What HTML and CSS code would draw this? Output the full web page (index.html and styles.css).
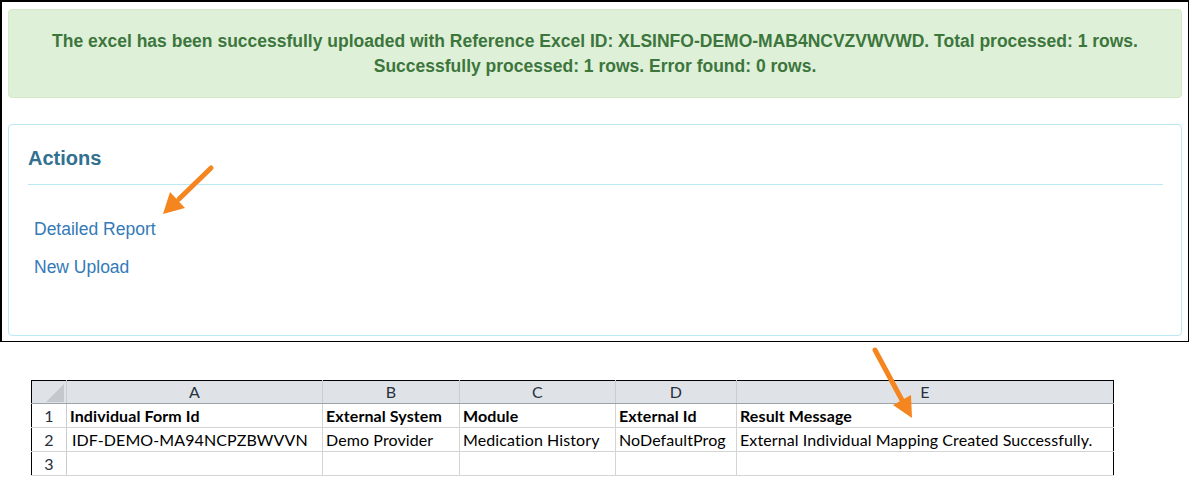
FILE: index.html
```html
<!DOCTYPE html>
<html>
<head>
<meta charset="utf-8">
<link rel="stylesheet" href="styles.css">
</head>
<body>
<div class="page">
  <div class="screen">
    <div class="alert">
      The excel has been successfully uploaded with Reference Excel ID: XLSINFO-DEMO-MAB4NCVZVWVWD. Total processed: 1 rows.<br>
      Successfully processed: 1 rows. Error found: 0 rows.
    </div>
    <div class="panel">
      <h4 class="panel-title">Actions</h4>
      <hr class="rule">
      <a class="link" href="#">Detailed Report</a>
      <a class="link" href="#">New Upload</a>
    </div>
  </div>
  <div class="sheet-wrap">
    <table class="sheet">
      <colgroup>
        <col class="c-rn"><col class="c-a"><col class="c-b"><col class="c-c"><col class="c-d"><col class="c-e">
      </colgroup>
      <tr class="hdr">
        <th class="corner"><svg class="tri" width="18" height="18" viewBox="0 0 18 18"><polygon points="18,0 18,18 0,18" fill="#c4c8cd"/></svg></th>
        <th>A</th><th>B</th><th>C</th><th>D</th><th>E</th>
      </tr>
      <tr>
        <td class="rn">1</td>
        <td class="b">Individual Form Id</td>
        <td class="b">External System</td>
        <td class="b">Module</td>
        <td class="b">External Id</td>
        <td class="b">Result Message</td>
      </tr>
      <tr>
        <td class="rn">2</td>
        <td class="ind">IDF-DEMO-MA94NCPZBWVVN</td>
        <td>Demo Provider</td>
        <td>Medication History</td>
        <td>NoDefaultProg</td>
        <td>External Individual Mapping Created Successfully.</td>
      </tr>
      <tr>
        <td class="rn">3</td>
        <td></td><td></td><td></td><td></td><td></td>
      </tr>
    </table>
  </div>
  <svg class="arrows" width="1192" height="490" viewBox="0 0 1192 490">
    <line x1="211" y1="168" x2="179" y2="199" stroke="#f5861f" stroke-width="5" stroke-linecap="round"/>
    <polygon points="163,214 185,208 170,192" fill="#f5861f"/>
    <line x1="875" y1="350" x2="903" y2="402" stroke="#f5861f" stroke-width="5" stroke-linecap="round"/>
    <polygon points="912,418 911,395 893,405" fill="#f5861f"/>
  </svg>
</div>
</body>
</html>
```
FILE: styles.css
```css
* { box-sizing: border-box; }
html, body { margin: 0; padding: 0; background: #fff; }
.page { position: relative; width: 1192px; height: 490px; overflow: hidden; }

.screen {
  width: 1189px;
  height: 342px;
  border: 1px solid #000;
  border-left-width: 2px;
  border-top-width: 2px;
  padding: 7px 6px 0 6px;
  font-family: "Liberation Sans", Arial, sans-serif;
}

.alert {
  height: 89px;
  background: #dff0d8;
  border: 1px solid #d6e9c6;
  border-radius: 4px;
  color: #3c763d;
  font-weight: bold;
  font-size: 17.5px;
  line-height: 25px;
  text-align: center;
  padding: 19px 4px 0;
  white-space: nowrap;
}

.panel {
  margin-top: 26px;
  height: 212px;
  border: 1px solid #bce8f1;
  border-radius: 4px;
  padding: 21px 18px 0 19px;
  display: flex;
  flex-direction: column;
  align-items: flex-start;
}

.panel-title {
  margin: 0;
  font-size: 20px;
  line-height: 24px;
  font-weight: bold;
  color: #31708f;
}

.rule {
  align-self: stretch;
  margin: 14px 0 34px;
  border: 0;
  border-top: 1px solid #bce8f1;
  height: 0;
}

.link {
  margin-left: 6px;
  font-size: 17.5px;
  line-height: 20px;
  color: #337ab7;
  text-decoration: none;
  margin-bottom: 18px;
}

.sheet-wrap { margin: 38px 0 0 31px; }

.sheet {
  border-collapse: collapse;
  table-layout: fixed;
  width: 1082px;
  border: 1px solid #000;
  font-family: Lato, "Open Sans", sans-serif;
  font-size: 16px;
  letter-spacing: 0.1px;
  color: #000;
}
.c-rn { width: 35px; }
.c-a { width: 256px; }
.c-b { width: 137px; }
.c-c { width: 156px; }
.c-d { width: 121px; }
.c-e { width: 377px; }

.sheet th {
  height: 23px;
  background: #dfe3e8;
  font-weight: normal;
  color: #27313d;
  border-left: 1px solid #c9cdd2;
  border-bottom: 1px solid #9ea3a9;
  padding: 0;
  text-align: center;
  vertical-align: middle;
  line-height: 20px;
}
.sheet th.corner { border-left: 0; }
.tri { display: block; margin: 1px 2px 0 auto; }

.sheet td {
  height: 24px;
  padding: 0 3px;
  border-left: 1px solid #d4d4d4;
  border-bottom: 1px solid #d4d4d4;
  white-space: nowrap;
  overflow: hidden;
  vertical-align: middle;
  line-height: 20px;
}
.sheet td.rn {
  border-left: 0;
  text-align: center;
  color: #27313d;
  border-right: 1px solid #c9cdd2;
}
.sheet td.b { font-weight: bold; }
.sheet td.ind { padding-left: 5px; }

.arrows { position: absolute; left: 0; top: 0; pointer-events: none; }
```
